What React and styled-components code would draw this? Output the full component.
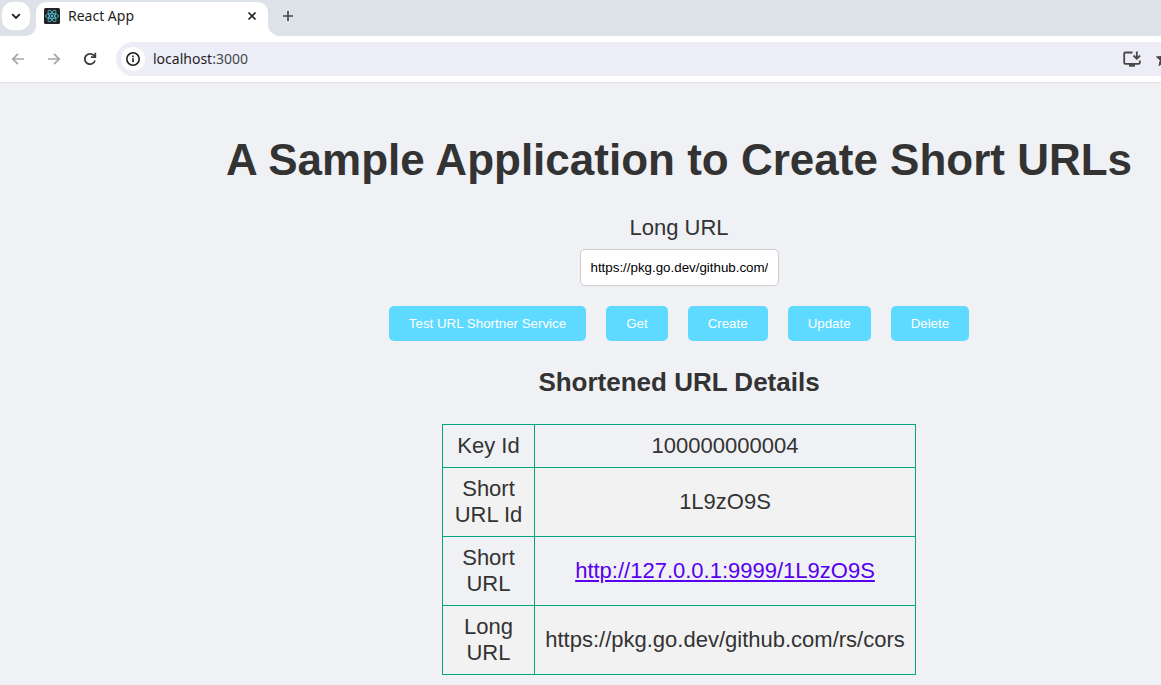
import React from "react";
import styled, { createGlobalStyle } from "styled-components";

const GlobalStyle = createGlobalStyle`
  *, *::before, *::after { box-sizing: border-box; }
  body {
    margin: 0;
    background: #eff1f5;
    color: #333333;
    font-family: "Liberation Sans", Arial, sans-serif;
  }
`;

const Browser = styled.div`
  display: flex;
  flex-direction: column;
  min-height: 100vh;
  overflow: hidden;
`;

const TabStrip = styled.header`
  display: flex;
  height: 36px;
  background: #ffffff;
`;

const StripStart = styled.div`
  width: 36px;
  padding: 2px;
  background: #dde1e8;
  border-bottom-right-radius: 10px;
`;

const StripEnd = styled.div`
  flex: 1;
  padding: 4px 8px;
  background: #dde1e8;
  border-bottom-left-radius: 12px;
`;

const IconButton = styled.button`
  display: flex;
  align-items: center;
  justify-content: center;
  flex: none;
  width: ${(p) => p.$size}px;
  height: ${(p) => p.$size}px;
  padding: 0;
  border: 0;
  border-radius: ${(p) => p.$radius || 14}px;
  background: ${(p) => (p.$filled ? "#ffffff" : "transparent")};
  color: ${(p) => p.$color || "#1f1f1f"};
`;

const TabHolder = styled.div`
  width: 232px;
  padding-top: 2px;
  background: #dde1e8;
`;

const Tab = styled.div`
  display: flex;
  align-items: center;
  gap: 8px;
  height: 34px;
  padding: 0 8px 6px;
  background: #ffffff;
  border-radius: 10px 10px 0 0;
`;

const TabTitle = styled.span`
  flex: 1;
  color: #1f1f1f;
  font: 14px/20px "Noto Sans", sans-serif;
`;

const Toolbar = styled.nav`
  display: flex;
  align-items: center;
  height: 47px;
  padding-left: 4px;
  border-bottom: 1px solid #dfe1e1;
  background: #ffffff;
`;

const NavButtons = styled.div`
  display: flex;
  gap: 8px;
  padding-right: 12px;
`;

const Omnibox = styled.div`
  display: flex;
  align-items: center;
  flex: 1;
  min-width: 0;
  height: 34px;
  padding-left: 5px;
  border-radius: 17px 0 0 17px;
  background: #ecedf7;
`;

const Address = styled.div`
  flex: 1;
  padding-left: 8px;
  color: #1f1f1f;
  font: 14px/20px "Noto Sans", sans-serif;
`;

const Port = styled.span`
  color: #474747;
`;

const ClippedAction = styled.div`
  width: 7px;
  margin-left: 12px;
  overflow: hidden;
`;

const Page = styled.main`
  display: flex;
  flex-direction: column;
  align-items: center;
  flex: 1;
  padding: 52px 0 10px 197px;
  font-size: 22px;
  line-height: 26px;
  text-align: center;
`;

const Title = styled.h1`
  margin: 0 0 30px;
  font-size: 44px;
  line-height: 50px;
`;

const Field = styled.div`
  display: flex;
  flex-direction: column;
  align-items: center;
  gap: 8px;
`;

const UrlInput = styled.input`
  width: 199px;
  height: 37px;
  padding: 10px;
  border: 1px solid #cccccc;
  border-radius: 5px;
  background: #ffffff;
  color: #000000;
  font-family: "Liberation Sans", Arial, sans-serif;
`;

const Actions = styled.div`
  display: flex;
  gap: 20px;
  margin: 20px 0 26px;
`;

const ActionButton = styled.button`
  height: 35px;
  padding: 0 20px;
  border: 0;
  border-radius: 5px;
  background: #5ed9ff;
  color: #ffffff;
  font-family: "Liberation Sans", Arial, sans-serif;
  cursor: pointer;
`;

const SectionTitle = styled.h2`
  margin: 0 0 27px;
  font-size: 26px;
  line-height: 30px;
`;

const DetailsTable = styled.table`
  width: 474px;
  border-collapse: collapse;
`;

const Row = styled.tr`
  &:nth-child(even) {
    background: #f2f2f2;
  }
`;

const cell = `
  padding: 8px;
  border: 1px solid #04a57f;
  font-weight: 400;
  text-align: center;
`;

const NameCell = styled.th`
  ${cell}
  width: 92px;
`;

const ValueCell = styled.td`
  ${cell}
`;

const ShortLink = styled.a`
  color: #5600ee;
`;

const Svg = ({ size = 18, width = 2, children }) => (
  <svg
    width={size}
    height={size}
    viewBox={`0 0 ${size} ${size}`}
    fill="none"
    stroke="currentColor"
    strokeWidth={width}
    aria-hidden="true"
  >
    {children}
  </svg>
);

const ReactLogo = () => (
  <svg width="16" height="16" viewBox="0 0 32 32" fill="none" aria-hidden="true">
    <rect width="32" height="32" rx="3" fill="#222222" />
    <g stroke="#53c1de" strokeWidth="1.7">
      <ellipse cx="16" cy="16" rx="13" ry="5" />
      <ellipse cx="16" cy="16" rx="13" ry="5" transform="rotate(60 16 16)" />
      <ellipse cx="16" cy="16" rx="13" ry="5" transform="rotate(120 16 16)" />
    </g>
    <circle cx="16" cy="16" r="2.6" fill="#53c1de" />
  </svg>
);

const actions = ["Test URL Shortner Service", "Get", "Create", "Update", "Delete"];

const details = [
  { name: "Key Id", value: "100000000004" },
  { name: "Short URL Id", value: "1L9zO9S" },
  { name: "Short URL", value: "http://127.0.0.1:9999/1L9zO9S", link: true },
  { name: "Long URL", value: "https://pkg.go.dev/github.com/rs/cors" },
];

export default function App() {
  return (
    <Browser>
      <GlobalStyle />
      <TabStrip>
        <StripStart>
          <IconButton $size={28} $radius={10} $filled aria-label="Search tabs">
            <Svg size={16} width={1.8}>
              <path d="M4.2 6.2 8 10l3.800-3.800" />
            </Svg>
          </IconButton>
        </StripStart>
        <TabHolder>
          <Tab>
            <ReactLogo />
            <TabTitle>React App</TabTitle>
            <IconButton $size={16} aria-label="Close tab">
              <Svg size={16} width={1.7}>
                <path d="m4.500 4.500 7 7m0-7-7 7" />
              </Svg>
            </IconButton>
          </Tab>
        </TabHolder>
        <StripEnd>
          <IconButton $size={24} $color="#474747" aria-label="New tab">
            <Svg size={16} width={1.7}>
              <path d="M8 3v10M3 8h10" />
            </Svg>
          </IconButton>
        </StripEnd>
      </TabStrip>
      <Toolbar>
        <NavButtons>
          <IconButton $size={28} $color="#a5a5a5" aria-label="Back">
            <Svg width={1.7}>
              <path d="M15 9H4M9 3.800 3.800 9 9 14.200" />
            </Svg>
          </IconButton>
          <IconButton $size={28} $color="#a5a5a5" aria-label="Forward">
            <Svg width={1.7}>
              <path d="M3 9h11M9 3.800 14.200 9 9 14.200" />
            </Svg>
          </IconButton>
          <IconButton $size={28} $color="#3c3c3c" aria-label="Reload">
            <Svg width={1.8}>
              <path d="M14 10.500A5.200 5.200 0 1 1 12.800 5.400L14 6.600" />
              <path d="M14.300 2.800v4.400H9.900" />
            </Svg>
          </IconButton>
        </NavButtons>
        <Omnibox>
          <IconButton $size={24} $filled aria-label="View site information">
            <Svg size={16} width={1.6}>
              <circle cx="8" cy="8" r="6.200" />
              <path d="M8 7.200v4M8 4.600v1.600" />
            </Svg>
          </IconButton>
          <Address>
            localhost<Port>:3000</Port>
          </Address>
          <IconButton $size={20} $color="#474747" aria-label="Install app">
            <Svg size={20} width={1.8}>
              <path d="M10.500 3.500H3.200a1 1 0 0 0-1 1v9.300a1 1 0 0 0 1 1h13.600a1 1 0 0 0 1-1v-2.300" />
              <path d="M14.800 2.500v6.800M11.500 6.500l3.300 3.300 3.300-3.300" />
              <path d="M7 16.300h6" strokeWidth="2.800" />
            </Svg>
          </IconButton>
          <ClippedAction>
            <IconButton $size={18} $color="#474747" aria-label="Bookmark this tab">
              <Svg width={1}>
                <path
                  fill="currentColor"
                  d="m9.500 2 2 4.500 5 .4-3.800 3.300 1.200 5.300-4.400-2.700L5 15.500l1.300-5.300L2.500 6.900l5-.4z"
                />
              </Svg>
            </IconButton>
          </ClippedAction>
        </Omnibox>
      </Toolbar>
      <Page>
        <Title>A Sample Application to Create Short URLs</Title>
        <Field>
          <label htmlFor="long-url">Long URL</label>
          <UrlInput
            id="long-url"
            type="text"
            defaultValue="https://pkg.go.dev/github.com/rs/cors"
          />
        </Field>
        <Actions>
          {actions.map((label) => (
            <ActionButton key={label} type="button">
              {label}
            </ActionButton>
          ))}
        </Actions>
        <SectionTitle>Shortened URL Details</SectionTitle>
        <DetailsTable>
          <tbody>
            {details.map(({ name, value, link }) => (
              <Row key={name}>
                <NameCell scope="row">{name}</NameCell>
                <ValueCell>
                  {link ? <ShortLink href={value}>{value}</ShortLink> : value}
                </ValueCell>
              </Row>
            ))}
          </tbody>
        </DetailsTable>
      </Page>
    </Browser>
  );
}
